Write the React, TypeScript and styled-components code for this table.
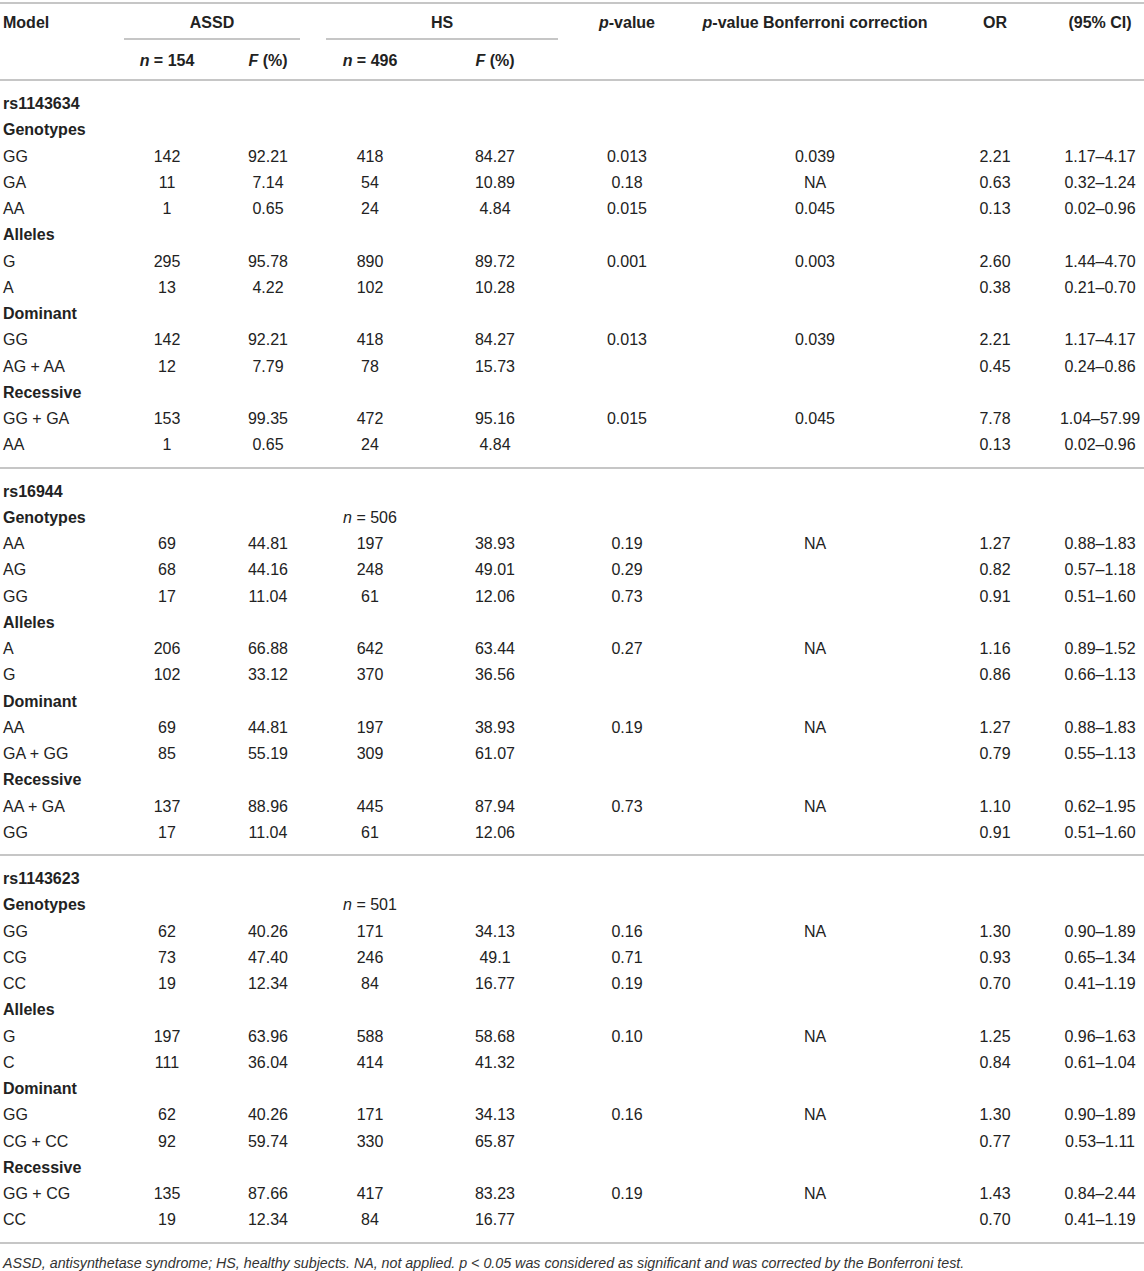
import React from "react";
import styled, { createGlobalStyle } from "styled-components";

const GlobalStyle = createGlobalStyle`
  body {
    margin: 0;
    background: #fff;
    font-family: "Liberation Sans", Arial, sans-serif;
    color: #222;
  }
`;

// column widths: Model | ASSD n | ASSD F | HS n | HS F | p | p Bonf | OR | CI
const COLS = "124px 86px 116px 88px 162px 102px 274px 86px 106px";
const LINE = "#c6c6c6";

const Table = styled.div`
  width: 1144px;
  padding-top: 2px;
  font-size: 16px;
`;

const Head = styled.div`
  display: grid;
  grid-template-columns: ${COLS};
  grid-template-rows: 36px 39px;
  border-top: 2px solid ${LINE};
  border-bottom: 2px solid ${LINE};
  font-weight: bold;
`;

const HeadCell = styled.div<{
  $col: number;
  $span?: number;
  $row?: number;
  $left?: boolean;
  $trim?: number;
  $pad?: number;
}>`
  grid-column: ${(p) => p.$col} / span ${(p) => p.$span ?? 1};
  grid-row: ${(p) => p.$row ?? 1};
  padding-top: ${(p) => (p.$row === 2 ? 12 : 10)}px;
  padding-left: ${(p) => (p.$left ? 3 : p.$pad ?? 0)}px;
  line-height: 18px;
  text-align: ${(p) => (p.$left ? "left" : "center")};
  white-space: nowrap;
  ${(p) =>
    p.$trim !== undefined
      ? `border-bottom: 2px solid ${LINE}; margin-right: ${p.$trim}px;`
      : ""}
`;

const Section = styled.div`
  padding: 10px 0 8px;
  border-bottom: 2px solid ${LINE};
`;

const Row = styled.div`
  display: grid;
  grid-template-columns: ${COLS};
  height: 26.25px;
  align-items: center;
  line-height: 18px;
`;

const Label = styled.div<{ $bold?: boolean }>`
  padding-left: 3px;
  font-weight: ${(p) => (p.$bold ? "bold" : "normal")};
  white-space: nowrap;
`;

const Num = styled.div<{ $pad?: number }>`
  text-align: center;
  padding-left: ${(p) => p.$pad ?? 0}px;
  white-space: nowrap;
`;

const Note = styled.p`
  margin: 0;
  padding: 10px 0 0 3px;
  font-size: 14.25px;
  line-height: 18px;
  font-style: italic;
  color: #333;
`;

type Group = { name: string; n?: string; rows: string[][] };
type Snp = { id: string; groups: Group[] };

const data: Snp[] = [
  {
    id: "rs1143634",
    groups: [
      {
        name: "Genotypes",
        rows: [
          ["GG", "142", "92.21", "418", "84.27", "0.013", "0.039", "2.21", "1.17–4.17"],
          ["GA", "11", "7.14", "54", "10.89", "0.18", "NA", "0.63", "0.32–1.24"],
          ["AA", "1", "0.65", "24", "4.84", "0.015", "0.045", "0.13", "0.02–0.96"],
        ],
      },
      {
        name: "Alleles",
        rows: [
          ["G", "295", "95.78", "890", "89.72", "0.001", "0.003", "2.60", "1.44–4.70"],
          ["A", "13", "4.22", "102", "10.28", "", "", "0.38", "0.21–0.70"],
        ],
      },
      {
        name: "Dominant",
        rows: [
          ["GG", "142", "92.21", "418", "84.27", "0.013", "0.039", "2.21", "1.17–4.17"],
          ["AG + AA", "12", "7.79", "78", "15.73", "", "", "0.45", "0.24–0.86"],
        ],
      },
      {
        name: "Recessive",
        rows: [
          ["GG + GA", "153", "99.35", "472", "95.16", "0.015", "0.045", "7.78", "1.04–57.99"],
          ["AA", "1", "0.65", "24", "4.84", "", "", "0.13", "0.02–0.96"],
        ],
      },
    ],
  },
  {
    id: "rs16944",
    groups: [
      {
        name: "Genotypes",
        n: "506",
        rows: [
          ["AA", "69", "44.81", "197", "38.93", "0.19", "NA", "1.27", "0.88–1.83"],
          ["AG", "68", "44.16", "248", "49.01", "0.29", "", "0.82", "0.57–1.18"],
          ["GG", "17", "11.04", "61", "12.06", "0.73", "", "0.91", "0.51–1.60"],
        ],
      },
      {
        name: "Alleles",
        rows: [
          ["A", "206", "66.88", "642", "63.44", "0.27", "NA", "1.16", "0.89–1.52"],
          ["G", "102", "33.12", "370", "36.56", "", "", "0.86", "0.66–1.13"],
        ],
      },
      {
        name: "Dominant",
        rows: [
          ["AA", "69", "44.81", "197", "38.93", "0.19", "NA", "1.27", "0.88–1.83"],
          ["GA + GG", "85", "55.19", "309", "61.07", "", "", "0.79", "0.55–1.13"],
        ],
      },
      {
        name: "Recessive",
        rows: [
          ["AA + GA", "137", "88.96", "445", "87.94", "0.73", "NA", "1.10", "0.62–1.95"],
          ["GG", "17", "11.04", "61", "12.06", "", "", "0.91", "0.51–1.60"],
        ],
      },
    ],
  },
  {
    id: "rs1143623",
    groups: [
      {
        name: "Genotypes",
        n: "501",
        rows: [
          ["GG", "62", "40.26", "171", "34.13", "0.16", "NA", "1.30", "0.90–1.89"],
          ["CG", "73", "47.40", "246", "49.1", "0.71", "", "0.93", "0.65–1.34"],
          ["CC", "19", "12.34", "84", "16.77", "0.19", "", "0.70", "0.41–1.19"],
        ],
      },
      {
        name: "Alleles",
        rows: [
          ["G", "197", "63.96", "588", "58.68", "0.10", "NA", "1.25", "0.96–1.63"],
          ["C", "111", "36.04", "414", "41.32", "", "", "0.84", "0.61–1.04"],
        ],
      },
      {
        name: "Dominant",
        rows: [
          ["GG", "62", "40.26", "171", "34.13", "0.16", "NA", "1.30", "0.90–1.89"],
          ["CG + CC", "92", "59.74", "330", "65.87", "", "", "0.77", "0.53–1.11"],
        ],
      },
      {
        name: "Recessive",
        rows: [
          ["GG + CG", "135", "87.66", "417", "83.23", "0.19", "NA", "1.43", "0.84–2.44"],
          ["CC", "19", "12.34", "84", "16.77", "", "", "0.70", "0.41–1.19"],
        ],
      },
    ],
  },
];

const CI_PAD = 18;

export default function App() {
  return (
    <>
      <GlobalStyle />
      <Table>
        <Head>
          <HeadCell $col={1} $left>Model</HeadCell>
          <HeadCell $col={2} $span={2} $trim={26}>ASSD</HeadCell>
          <HeadCell $col={4} $span={2} $trim={18}>HS</HeadCell>
          <HeadCell $col={6}><i>p</i>-value</HeadCell>
          <HeadCell $col={7}><i>p</i>-value Bonferroni correction</HeadCell>
          <HeadCell $col={8}>OR</HeadCell>
          <HeadCell $col={9} $pad={CI_PAD}>(95% CI)</HeadCell>
          <HeadCell $col={2} $row={2}><i>n</i> = 154</HeadCell>
          <HeadCell $col={3} $row={2}><i>F</i> (%)</HeadCell>
          <HeadCell $col={4} $row={2}><i>n</i> = 496</HeadCell>
          <HeadCell $col={5} $row={2}><i>F</i> (%)</HeadCell>
        </Head>

        {data.map((snp) => (
          <Section key={snp.id}>
            <Row>
              <Label $bold>{snp.id}</Label>
            </Row>
            {snp.groups.map((g) => (
              <React.Fragment key={g.name}>
                <Row>
                  <Label $bold>{g.name}</Label>
                  {g.n && (
                    <>
                      <Num />
                      <Num />
                      <Num><i>n</i> = {g.n}</Num>
                    </>
                  )}
                </Row>
                {g.rows.map((r, i) => (
                  <Row key={i}>
                    <Label>{r[0]}</Label>
                    {r.slice(1).map((v, j) => (
                      <Num key={j} $pad={j === 7 ? CI_PAD : 0}>{v}</Num>
                    ))}
                  </Row>
                ))}
              </React.Fragment>
            ))}
          </Section>
        ))}

        <Note>
          ASSD, antisynthetase syndrome; HS, healthy subjects. NA, not applied. p &lt; 0.05 was
          considered as significant and was corrected by the Bonferroni test.
        </Note>
      </Table>
    </>
  );
}
